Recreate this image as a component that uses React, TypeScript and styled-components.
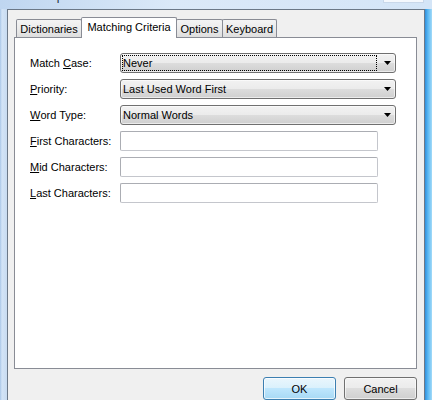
import styled, { createGlobalStyle } from "styled-components";

const GlobalStyle = createGlobalStyle`
    html, body {
        margin: 0;
        padding: 0;
        background: #f0f0f0;
    }
    body {
        font-family: "Liberation Sans", Arial, sans-serif;
        font-size: 11px;
        color: #000;
    }
`;

const Window = styled.div`
    width: 432px;
    height: 400px;
    overflow: hidden;
    display: flex;
    flex-direction: column;
    background: linear-gradient(90deg, #bfd6f0 0%, #dbe9f8 40%, #d4e5f7 100%);
`;

const TitleBar = styled.div`
    height: 9px;
    flex: none;
    display: flex;
    justify-content: space-between;
    align-items: flex-start;
    overflow: hidden;
`;

const TitleText = styled.span`
    font-size: 12px;
    line-height: 12px;
    margin-top: -10px;
    padding-left: 32px;
    color: #1e2a3a;
`;

const CloseButtonEdge = styled.div`
    width: 39px;
    height: 2px;
    margin-right: 8px;
    background: #f4f8fd;
    border: 1px solid #c9d8ea;
    border-top: none;
`;

const FrameRow = styled.div`
    flex: 1;
    display: flex;
    min-height: 0;
`;

const LeftEdge = styled.div`
    width: 7px;
    flex: none;
    background: linear-gradient(90deg, #a9c6e7 0px, #d3e4f6 2px, #c8dbf0 7px);
`;

const RightEdge = styled.div`
    width: 7px;
    flex: none;
    background: linear-gradient(90deg, #2f8fdc 0px, #5ab8f2 3px, #a3daf8 7px);
`;

const Client = styled.div`
    flex: 1;
    display: flex;
    flex-direction: column;
    background: #f0f0f0;
    border: 1px solid #6b7887;
    border-bottom: none;
    padding: 7px 7px 0 6px;
`;

const TabStrip = styled.div`
    display: flex;
    align-items: flex-end;
    height: 20px;
    padding-left: 2px;
`;

const Tab = styled.div<{ $active?: boolean; $w: number }>`
    box-sizing: border-box;
    width: ${(p) => p.$w}px;
    height: ${(p) => (p.$active ? 21 : 18)}px;
    margin-left: -1px;
    margin-bottom: ${(p) => (p.$active ? -1 : 0)}px;
    padding-bottom: ${(p) => (p.$active ? 2 : 0)}px;
    display: flex;
    align-items: center;
    justify-content: center;
    border: 1px solid #898c95;
    border-bottom: none;
    border-radius: 2px 2px 0 0;
    background: ${(p) =>
        p.$active ? "#fff" : "linear-gradient(#f4f4f4 0%, #ebebeb 50%, #dedede 100%)"};
    position: relative;
    z-index: ${(p) => (p.$active ? 2 : 0)};
    white-space: nowrap;
    &:first-child {
        margin-left: 0;
    }
`;

const Panel = styled.div`
    position: relative;
    z-index: 1;
    box-sizing: border-box;
    height: 337px;
    background: #fff;
    border: 1px solid #898c95;
    padding: 15px 20px 0 15px;
`;

const Form = styled.div`
    display: grid;
    grid-template-columns: 90px auto;
    grid-auto-rows: 20px;
    row-gap: 6px;
    justify-content: start;
`;

const Label = styled.label`
    display: flex;
    align-items: center;
    white-space: nowrap;
    u {
        text-decoration: underline;
        text-underline-offset: 1px;
    }
`;

const Combo = styled.div`
    box-sizing: border-box;
    width: 276px;
    height: 20px;
    display: flex;
    align-items: center;
    padding: 0 4px 0 1px;
    border: 1px solid #707070;
    border-radius: 3px;
    background: linear-gradient(#f2f2f2 0%, #ebebeb 50%, #dddddd 50%, #cfcfcf 100%);
    box-shadow: inset 0 0 0 1px rgba(255, 255, 255, 0.6);
`;

const ComboValue = styled.div<{ $focused?: boolean }>`
    flex: 1;
    box-sizing: border-box;
    height: 16px;
    display: flex;
    align-items: center;
    border: 1px dotted ${(p) => (p.$focused ? "#000" : "transparent")};
    white-space: nowrap;
`;

const ArrowIcon = styled.svg`
    width: 7px;
    height: 4px;
    margin-left: 7px;
    flex: none;
`;

const TextBox = styled.div`
    box-sizing: border-box;
    width: 258px;
    height: 20px;
    background: #fff;
    border: 1px solid #abadb3;
    border-right-color: #c4c6cc;
    border-bottom-color: #c4c6cc;
    border-radius: 2px;
`;

const ButtonRow = styled.div`
    display: flex;
    justify-content: flex-end;
    gap: 8px;
    margin-top: 8px;
`;

const Button = styled.button<{ $default?: boolean }>`
    box-sizing: border-box;
    width: 73px;
    height: 23px;
    padding: 0;
    font-family: "Liberation Sans", Arial, sans-serif;
    font-size: 11px;
    color: #000;
    border-radius: 3px;
    border: 1px solid ${(p) => (p.$default ? "#3c7fb1" : "#707070")};
    background: ${(p) =>
        p.$default
            ? "linear-gradient(#eaf6fd 0%, #d9f0fc 50%, #bee6fd 50%, #a7d9f5 100%)"
            : "linear-gradient(#f2f2f2 0%, #ebebeb 50%, #dddddd 50%, #cfcfcf 100%)"};
    box-shadow: inset 0 0 0 1px ${(p) => (p.$default ? "rgba(255,255,255,0.7)" : "rgba(255,255,255,0.6)")};
`;

const Arrow = () => (
    <ArrowIcon viewBox="0 0 7 4">
        <path d="M0 0h7L3.5 4z" fill="#000" />
    </ArrowIcon>
);

const tabs = [
    { name: "Dictionaries", w: 66 },
    { name: "Matching Criteria", w: 96, active: true },
    { name: "Options", w: 47 },
    { name: "Keyboard", w: 55 },
];

function App() {
    return (
        <>
            <GlobalStyle />
            <Window>
                <TitleBar>
                    <TitleText>Setup</TitleText>
                    <CloseButtonEdge />
                </TitleBar>
                <FrameRow>
                    <LeftEdge />
                    <Client>
                        <TabStrip>
                            {tabs.map((t) => (
                                <Tab key={t.name} $w={t.w} $active={t.active}>
                                    {t.name}
                                </Tab>
                            ))}
                        </TabStrip>
                        <Panel>
                            <Form>
                                <Label>
                                    Match&nbsp;<u>C</u>ase:
                                </Label>
                                <Combo>
                                    <ComboValue $focused>Never</ComboValue>
                                    <Arrow />
                                </Combo>

                                <Label>
                                    <u>P</u>riority:
                                </Label>
                                <Combo>
                                    <ComboValue>Last Used Word First</ComboValue>
                                    <Arrow />
                                </Combo>

                                <Label>
                                    <u>W</u>ord Type:
                                </Label>
                                <Combo>
                                    <ComboValue>Normal Words</ComboValue>
                                    <Arrow />
                                </Combo>

                                <Label>
                                    <u>F</u>irst Characters:
                                </Label>
                                <TextBox />

                                <Label>
                                    <u>M</u>id Characters:
                                </Label>
                                <TextBox />

                                <Label>
                                    <u>L</u>ast Characters:
                                </Label>
                                <TextBox />
                            </Form>
                        </Panel>
                        <ButtonRow>
                            <Button $default>OK</Button>
                            <Button>Cancel</Button>
                        </ButtonRow>
                    </Client>
                    <RightEdge />
                </FrameRow>
            </Window>
        </>
    );
}

export default App;
